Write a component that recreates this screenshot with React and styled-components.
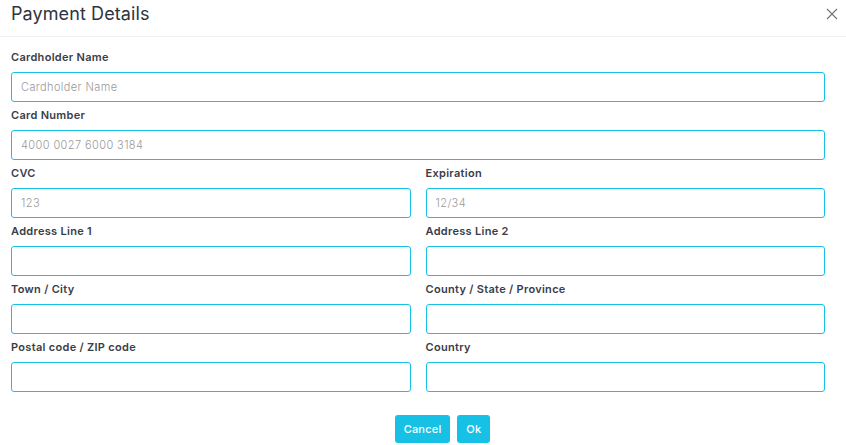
import styled, { createGlobalStyle } from "styled-components";

const Global = createGlobalStyle`
  body {
    margin: 0;
    background: #fff;
    font-family: "Inter", "Noto Sans", sans-serif;
  }
`
const Modal = styled.div`
  width: 846px;
  height: 445px;
  background: #fff;
  overflow: hidden;
`
const Header = styled.div`
  height: 37px;
  border-bottom: 1px solid #f0f0f0;
  display: flex;
  align-items: flex-start;
  justify-content: space-between;
  padding: 2px 7px 0 11px;
  box-sizing: border-box;
`
const Title = styled.h2`
  margin: 0;
  font-size: 18px;
  line-height: 24px;
  font-weight: 400;
  color: #2f3340;
  letter-spacing: 0.1px;
`
const Close = styled.button`
  border: none;
  background: none;
  padding: 0;
  margin-top: 5px;
  width: 14px;
  height: 14px;
  cursor: pointer;
  display: flex;
`
const Body = styled.div`
  padding: 12px 21px 0 11px;
`
const Grid = styled.div`
  display: grid;
  grid-template-columns: 1fr 1fr;
  column-gap: 15px;
`
const Field = styled.div`
  grid-column: ${p => (p.$full ? "1 / -1" : "auto")};
  margin-bottom: 5px;
`
const Label = styled.label`
  display: block;
  font-size: 11px;
  line-height: 16px;
  font-weight: 600;
  color: #3a3d48;
  letter-spacing: 0.3px;
  margin-bottom: 7px;
`
const Input = styled.input`
  display: block;
  width: 100%;
  height: 30px;
  box-sizing: border-box;
  border: 1px solid #17c1e6;
  border-radius: 3px;
  padding: 0 9px;
  font-family: inherit;
  font-size: 11px;
  letter-spacing: 0.4px;
  color: #333;
  outline: none;
  &::placeholder {
    color: #9a9a9a;
    font-weight: 300;
  }
`
const Footer = styled.div`
  display: flex;
  justify-content: center;
  gap: 7px;
  padding: 18px 0 0 39px;
`
const Button = styled.button`
  height: 28px;
  padding: 0 9px;
  border: none;
  border-radius: 3px;
  background: #17c1e6;
  color: #fff;
  font-family: inherit;
  font-size: 11px;
  font-weight: 500;
  letter-spacing: 0.2px;
  cursor: pointer;
`

function App() {
  return (
    <Modal>
      <Global />
      <Header>
        <Title>Payment Details</Title>
        <Close aria-label="close">
          <svg width="14" height="14" viewBox="0 0 14 14">
            <path d="M2 2 L12 12 M12 2 L2 12" stroke="#777" strokeWidth="1.2" />
          </svg>
        </Close>
      </Header>
      <Body>
        <Grid>
          <Field $full>
            <Label>Cardholder Name</Label>
            <Input placeholder="Cardholder Name" />
          </Field>
          <Field $full>
            <Label>Card Number</Label>
            <Input placeholder="4000 0027 6000 3184" />
          </Field>
          <Field>
            <Label>CVC</Label>
            <Input placeholder="123" />
          </Field>
          <Field>
            <Label>Expiration</Label>
            <Input placeholder="12/34" />
          </Field>
          <Field>
            <Label>Address Line 1</Label>
            <Input />
          </Field>
          <Field>
            <Label>Address Line 2</Label>
            <Input />
          </Field>
          <Field>
            <Label>Town / City</Label>
            <Input />
          </Field>
          <Field>
            <Label>County / State / Province</Label>
            <Input />
          </Field>
          <Field>
            <Label>Postal code / ZIP code</Label>
            <Input />
          </Field>
          <Field>
            <Label>Country</Label>
            <Input />
          </Field>
        </Grid>
      </Body>
      <Footer>
        <Button>Cancel</Button>
        <Button>Ok</Button>
      </Footer>
    </Modal>
  );
}

export default App;
